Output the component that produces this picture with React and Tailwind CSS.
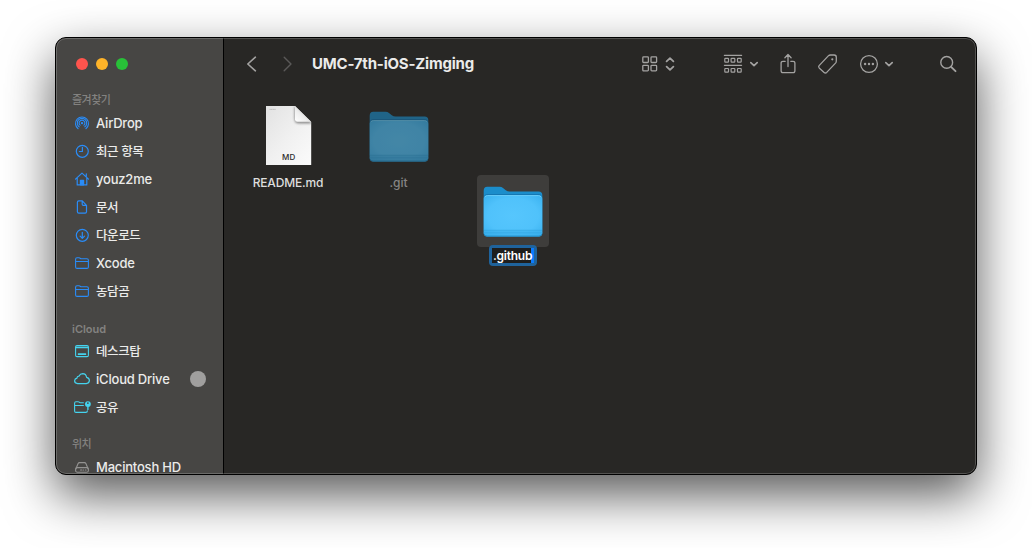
import React from "react";

const Svg = ({ w, h, className = "", sw = 1.2, children }) => (
  <svg
    width={w}
    height={h}
    viewBox={`0 0 ${w} ${h}`}
    fill="none"
    stroke="currentColor"
    strokeWidth={sw}
    strokeLinecap="round"
    strokeLinejoin="round"
    className={`block shrink-0 ${className}`}
  >
    {children}
  </svg>
);

const AirDropIcon = () => (
  <Svg w={16} h={16} sw={1.1}>
    <path d="M4.1 13.7A6.5 6.5 0 1 1 11.9 13.7" />
    <path d="M5.1 11.8A4.7 4.7 0 1 1 10.9 11.8" />
    <path d="M6.1 10.2A2.9 2.9 0 1 1 9.9 10.2" />
    <circle cx="8" cy="8.1" r="1.2" fill="currentColor" stroke="none" />
  </Svg>
);
const ClockIcon = () => (
  <Svg w={16} h={16}>
    <circle cx="8.3" cy="8.3" r="6" />
    <path d="M8.4 4.4V8.5H5.4" />
  </Svg>
);
const HomeIcon = () => (
  <Svg w={16} h={16}>
    <path d="M1.5 8.1L8 2.1L14.5 8.1M3.2 7V13.9H12.8V7M12.3 5.5V2.8" />
    <path d="M6.4 13.8V9.3H9.6V13.8Z" fill="currentColor" />
  </Svg>
);
const DocIcon = () => (
  <Svg w={16} h={16}>
    <path d="M3.4 3.3Q3.4 1.9 4.8 1.9H8.3L12.5 6.3V12.7Q12.5 14.1 11.1 14.1H4.8Q3.4 14.1 3.4 12.7ZM8.2 2V5.3Q8.2 6.4 9.3 6.4H12.4" />
  </Svg>
);
const DownloadIcon = () => (
  <Svg w={16} h={16}>
    <circle cx="8.3" cy="8.3" r="6" />
    <path d="M8.3 5.3V11.2M6.1 9.1L8.3 11.3L10.5 9.1" />
  </Svg>
);
const FolderIcon = () => (
  <Svg w={16} h={16} sw={1.1}>
    <path d="M1.6 4.2Q1.6 2.8 3 2.8H5.1Q5.7 2.8 6.2 3.3Q6.7 3.7 7.3 3.7H12.9Q14.4 3.7 14.4 5.2V11.9Q14.4 13.4 12.9 13.4H3.1Q1.6 13.4 1.6 11.9ZM1.8 6.5H14.2" />
  </Svg>
);
const DesktopIcon = () => (
  <Svg w={16} h={16} sw={1.1}>
    <rect x="1.6" y="2.6" width="12.8" height="11" rx="1.4" />
    <path d="M2 4.5H14" strokeWidth="1.5" />
    <rect x="3.8" y="10.3" width="8.4" height="1.8" rx=".4" fill="currentColor" stroke="none" />
  </Svg>
);
const CloudIcon = () => (
  <Svg w={18} h={16} sw={1.2}>
    <path d="M4.7 12.6Q1.6 12.4 1.6 9.8Q1.7 7.6 4 7.1Q4 5.3 5.9 5.2Q7.2 2.6 9.7 2.6Q13 2.7 13.6 6.3Q16.4 6.9 16.4 9.5Q16.2 12.4 13.2 12.6Z" />
  </Svg>
);
const SharedIcon = () => (
  <Svg w={18} h={16} sw={1.1}>
    <path d="M10.4 3.7H7.3Q6.7 3.7 6.2 3.2Q5.7 2.7 5.1 2.7H3Q1.6 2.7 1.6 4.2V11.9Q1.6 13.4 3 13.4H12.8Q14.4 13.4 14.4 11.7M1.8 6.5H10.4" />
    <circle cx="14.9" cy="5.1" r="2.9" fill="currentColor" stroke="none" />
    <circle cx="14.9" cy="4.1" r=".9" fill="#474644" stroke="none" />
    <path d="M14.9 7V10.4" strokeWidth="1.4" />
  </Svg>
);
const DriveIcon = () => (
  <Svg w={16} h={16} sw={1.1}>
    <path d="M1.8 10L4 4.7Q4.5 3.6 5.6 3.6H10.4Q11.5 3.6 12 4.7L14.2 10" />
    <rect x="1.6" y="8.6" width="12.8" height="4.6" rx="1.8" />
    <path d="M6.5 11H8M9.4 11H9.6M11.4 11H12" />
  </Svg>
);

const sections = [
  {
    title: "즐겨찾기",
    head: "h-[19px] pt-0.5 tracking-[-0.5px]",
    color: "text-[#2a8cf7]",
    items: [
      ["AirDrop", AirDropIcon],
      ["최근 항목", ClockIcon],
      ["youz2me", HomeIcon],
      ["문서", DocIcon],
      ["다운로드", DownloadIcon],
      ["Xcode", FolderIcon],
      ["농담곰", FolderIcon],
    ],
  },
  {
    title: "iCloud",
    head: "mt-[15px] h-[17px] pt-0.5",
    color: "text-[#45d3ee]",
    items: [
      ["데스크탑", DesktopIcon],
      ["iCloud Drive", CloudIcon],
      ["공유", SharedIcon],
    ],
  },
  {
    title: "위치",
    head: "mt-[14px] h-[18px] tracking-[-0.5px]",
    color: "text-[#939291]",
    items: [["Macintosh HD", DriveIcon]],
  },
];

const isHangul = (s) => /[\uac00-\ud7a3]/.test(s);

function Sidebar() {
  return (
    <aside className="flex w-[168px] shrink-0 flex-col overflow-hidden border-r border-black bg-[#474644]">
      <div className="flex h-[52px] shrink-0 items-center gap-2 pl-5">
        <span className="size-3 rounded-full bg-[#ff544d]" />
        <span className="size-3 rounded-full bg-[#ffb429]" />
        <span className="size-3 rounded-full bg-[#28c138]" />
      </div>
      {sections.map((s) => (
        <section key={s.title} className="shrink-0">
          <h2
            className={`${s.head} ${isHangul(s.title) ? "font-medium" : "font-semibold"} flex items-center pl-4 text-[11px] leading-none text-[#838280]`}
          >
            {s.title}
          </h2>
          <ul>
            {s.items.map(([label, Icon]) => (
              <li key={label} className="flex h-7 items-center pr-[17px] pl-4">
                <span className={`flex w-5 shrink-0 justify-center ${s.color}`}>
                  <Icon />
                </span>
                <span
                  className={`${isHangul(label) ? "pt-[3px] text-[12.5px] tracking-[-0.4px]" : "text-[13px] tracking-[-0.2px]"} ml-1 grow leading-none font-medium whitespace-nowrap text-[#ebebea]`}
                >
                  {label}
                </span>
                {label === "iCloud Drive" && <span className="size-4 rounded-full bg-[#a09f9e]" />}
              </li>
            ))}
          </ul>
        </section>
      ))}
    </aside>
  );
}

const ChevronSmall = ({ className }) => (
  <Svg w={10} h={8} sw={1.7} className={className}>
    <path d="M1.8 2.6L5 5.7L8.2 2.6" />
  </Svg>
);

function Toolbar() {
  return (
    <header className="flex h-[51px] shrink-0 items-center pr-[19px] pl-[22px] text-[#a3a2a1]">
      <Svg w={12} h={18} sw={1.6}>
        <path d="M9.4 2.2L1.8 9L9.4 15.8" />
      </Svg>
      <Svg w={12} h={18} sw={1.4} className="ml-6 text-[#5a5958]">
        <path d="M2.2 2.2L9 9L2.2 15.8" />
      </Svg>
      <h1 className="ml-[18px] grow text-[15px] leading-none font-bold tracking-[-0.2px] whitespace-nowrap text-[#ebebea]">
        UMC-7th-iOS-Zimging
      </h1>
      <Svg w={18} h={18} sw={1.3}>
        <rect x="1.8" y="1.9" width="5.6" height="5.6" rx=".8" />
        <rect x="10" y="1.9" width="5.6" height="5.6" rx=".8" />
        <rect x="1.8" y="10.3" width="5.6" height="5.6" rx=".8" />
        <rect x="10" y="10.3" width="5.6" height="5.6" rx=".8" />
      </Svg>
      <Svg w={10} h={16} sw={1.8} className="ml-[6px]">
        <path d="M1.6 5.4L5 2.1L8.4 5.4M1.6 10.6L5 13.9L8.4 10.6" />
      </Svg>
      <Svg w={20} h={20} sw={1.2} className="ml-12">
        <path d="M1.4 1.4H18.6M1.4 11.3H18.6" />
        <rect x="1.8" y="4.4" width="3.7" height="3.7" rx=".6" />
        <rect x="8.1" y="4.4" width="3.7" height="3.7" rx=".6" />
        <rect x="14.5" y="4.4" width="3.7" height="3.7" rx=".6" />
        <rect x="1.8" y="14.5" width="3.7" height="3.7" rx=".6" />
        <rect x="8.1" y="14.5" width="3.7" height="3.7" rx=".6" />
        <rect x="14.5" y="14.5" width="3.7" height="3.7" rx=".6" />
      </Svg>
      <ChevronSmall className="ml-1.5" />
      <Svg w={18} h={22} sw={1.3} className="ml-5">
        <path d="M6.2 8.3H4Q2.1 8.3 2.1 10.1V17.7Q2.1 19.6 4 19.6H14Q15.9 19.6 15.9 17.7V10.1Q15.9 8.3 14 8.3H11.8M9 13.5V1.8M5.9 4.7L9 1.5L12.1 4.7" />
      </Svg>
      <Svg w={22} h={22} sw={1.3} className="ml-5">
        <path d="M2.1 12.6L11.3 2.9Q12.2 2 13.4 2H17.1Q19.3 2 19.3 4.2V7.9Q19.3 9.2 18.5 10.1L9.7 19.4Q8.4 20.6 7.1 19.4L2.2 14.9Q1.1 13.8 2.1 12.6Z" />
        <circle cx="15.3" cy="6.3" r="1.1" fill="currentColor" stroke="none" />
      </Svg>
      <Svg w={20} h={20} sw={1.3} className="ml-5">
        <circle cx="10" cy="10" r="8.4" />
        <circle cx="6.1" cy="10" r="1.2" fill="currentColor" stroke="none" />
        <circle cx="10" cy="10" r="1.2" fill="currentColor" stroke="none" />
        <circle cx="13.9" cy="10" r="1.2" fill="currentColor" stroke="none" />
      </Svg>
      <ChevronSmall className="ml-[5px]" />
      <Svg w={18} h={18} sw={1.4} className="ml-[45px]">
        <circle cx="7.7" cy="7.4" r="5.9" />
        <path d="M12.1 11.8L16.5 16.2" strokeWidth="1.9" />
      </Svg>
    </header>
  );
}

const FolderArt = ({ id, dim }) => (
  <svg width="60" height="52" viewBox="0 0 60 52" className={`block ${dim ? "opacity-[.6]" : ""}`}>
    <defs>
      <radialGradient id={id} cx=".5" cy=".5" r=".72">
        <stop offset="0" stopColor="#56c6fd" />
        <stop offset=".6" stopColor="#50c2fb" />
        <stop offset="1" stopColor="#38b0ee" />
      </radialGradient>
    </defs>
    <path
      d="M.7 4.7Q.7 .7 4.2 .7H16.6Q18.6 .7 20 1.9L22.8 4.2Q24.4 5.6 26.6 5.6H55.6Q59.3 5.6 59.3 9.1V44H.7Z"
      fill="#1b8dcb"
    />
    <path d="M1 12Q1 8.1 4.6 8.1H55.4Q59 8.1 59 12V20H1Z" fill="#1478b4" />
    <rect x=".7" y="9.2" width="58.6" height="41.2" rx="3.6" fill={`url(#${id})`} />
    <path d="M2 10.8Q3 9.6 4.6 9.6H55.4Q57 9.6 58 10.8" stroke="#6fd0fc" strokeWidth=".9" fill="none" />
    <path d="M.7 44.2H59.3V46.8Q59.3 50.4 55.7 50.4H4.3Q.7 50.4 .7 46.8Z" fill="#37aeea" opacity=".5" />
    <path d="M.7 44.2H59.3M.7 46.8H59.3" stroke="#2c9fdb" strokeWidth=".6" opacity=".8" />
    <path d="M.9 47.8Q1.5 50.1 4.3 50.1H55.7Q58.5 50.1 59.1 47.8" stroke="#1c8ccb" strokeWidth=".9" fill="none" />
  </svg>
);

const DocumentArt = () => (
  <svg width="46" height="60" viewBox="0 0 46 60" className="block">
    <defs>
      <linearGradient id="page" x1="0" y1="0" x2="1" y2="1">
        <stop offset="0" stopColor="#e2e2e2" />
        <stop offset=".5" stopColor="#f0f0f0" />
        <stop offset="1" stopColor="#fbfbfb" />
      </linearGradient>
      <linearGradient id="curl" x1="0" y1="1" x2=".75" y2=".25">
        <stop offset="0" stopColor="#ffffff" />
        <stop offset=".55" stopColor="#ededed" />
        <stop offset="1" stopColor="#bdbdbd" />
      </linearGradient>
      <filter id="soft" x="-50%" y="-50%" width="200%" height="200%">
        <feGaussianBlur stdDeviation="1.3" />
      </filter>
      <clipPath id="sheet">
        <path d="M0 0H29L45.2 16V59H0Z" />
      </clipPath>
    </defs>
    <path d="M0 0H29L45.2 16V59H0Z" fill="url(#page)" />
    <g clipPath="url(#sheet)">
      <path d="M28.5 0V13Q28.5 17.5 33 17.5H46L44 15Z" fill="#666" opacity=".7" filter="url(#soft)" />
    </g>
    <path d="M29 0V13.4Q29 15.8 31.4 15.8H45.2Z" fill="url(#curl)" />
    <path d="M3.5 3.4H10" stroke="#aaa" strokeWidth=".7" strokeDasharray="1.2 .4" />
    <text
      x="22.8"
      y="54"
      textAnchor="middle"
      fontFamily="Inter, sans-serif"
      fontSize="8"
      fontWeight="500"
      letterSpacing=".3"
      fill="#2a2a2a"
    >
      MD
    </text>
  </svg>
);

function Files() {
  return (
    <div className="flex grow items-start pt-[11px] pl-7 text-xs leading-4">
      <figure className="flex w-[73px] flex-col items-center">
        <div className="flex h-[72px] items-start justify-center pt-1.5">
          <DocumentArt />
        </div>
        <figcaption className="mt-[3px] pr-px font-medium tracking-[-0.15px] whitespace-nowrap text-[#dededd]">
          README.md
        </figcaption>
      </figure>
      <figure className="ml-[38px] flex w-[72px] flex-col items-center">
        <div className="flex h-[72px] items-start pt-[11px]">
          <FolderArt id="folderDim" dim />
        </div>
        <figcaption className="mt-[3px] pr-px font-medium text-[#868584]">.git</figcaption>
      </figure>
      <figure className="mt-[75px] ml-[42px] flex w-[72px] flex-col items-center">
        <div className="flex size-[72px] items-start justify-center rounded-[4px] bg-[#3e3d3b] pt-[11px]">
          <FolderArt id="folderLit" />
        </div>
        <figcaption className="-mt-0.5 flex h-[21px] w-12 items-center justify-center rounded-[4px] bg-[#1f639c] p-[3px]">
          <span className="flex h-[15px] w-full items-center justify-between bg-[#1e1e1d] pl-[1px] leading-none font-semibold tracking-[-0.25px] text-white">
            <span className="z-10 w-[38px] shrink-0 leading-[15px]">.github</span>
            <span className="h-[15px] w-[3px] shrink-0 bg-[#0a7bff]" />
          </span>
        </figcaption>
      </figure>
    </div>
  );
}

export default function App() {
  return (
    <div className="h-[548px] w-[1032px] overflow-hidden bg-white pt-[37px] pl-[55px] font-['Inter','Noto_Sans_CJK_KR',sans-serif]">
      <div className="relative flex h-[438px] w-[922px] overflow-hidden rounded-[11px] border border-black bg-[#282725] shadow-[0_20px_50px_rgba(0,0,0,0.66)]">
        <Sidebar />
        <main className="flex grow flex-col">
          <Toolbar />
          <Files />
        </main>
        <div className="pointer-events-none absolute inset-0 rounded-[10px] border border-white/20" />
      </div>
    </div>
  );
}
